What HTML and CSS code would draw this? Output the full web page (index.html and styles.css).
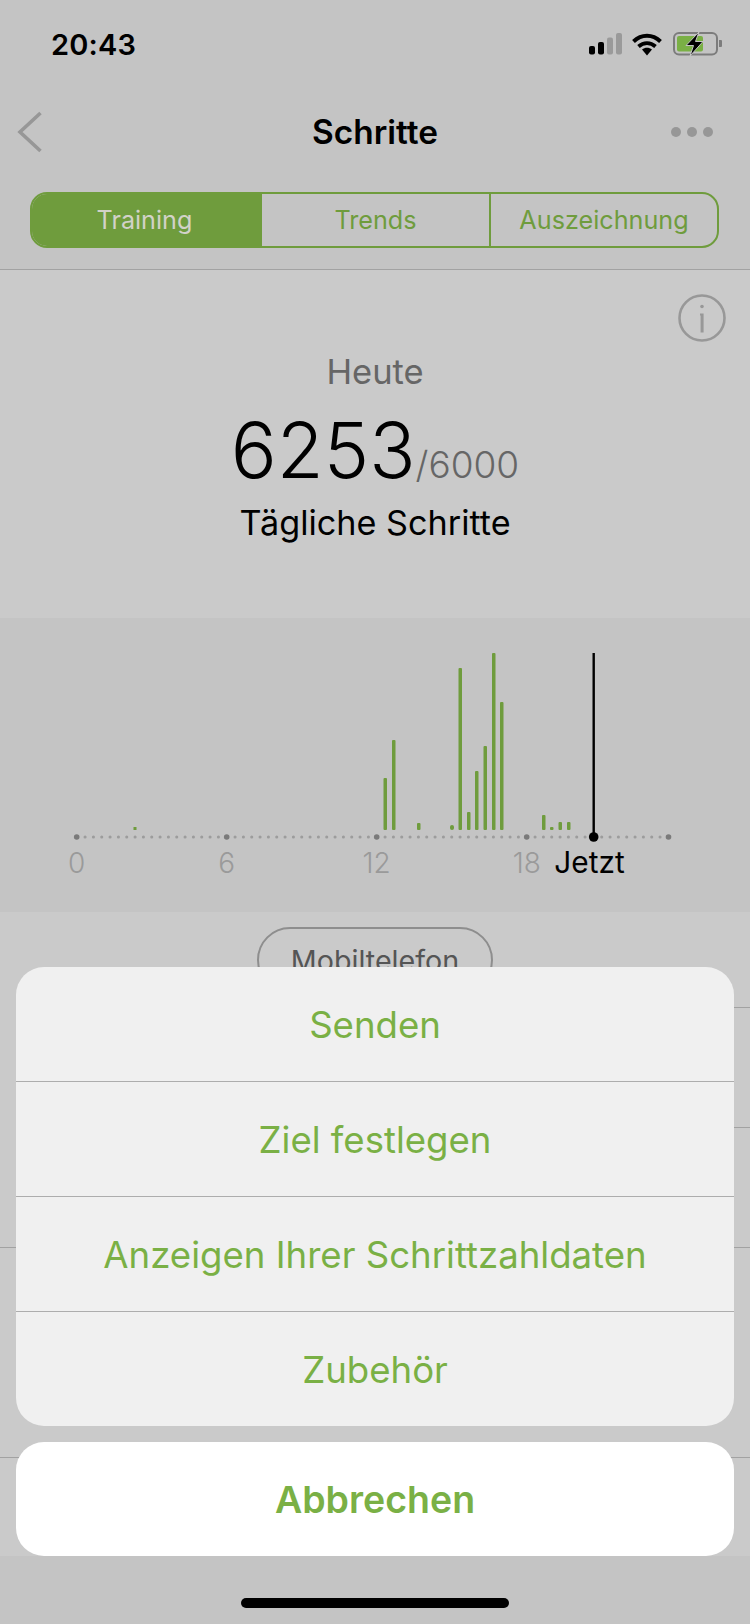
FILE: index.html
```html
<!DOCTYPE html>
<html lang="de">
<head>
<meta charset="utf-8">
<title>Schritte</title>
<link rel="stylesheet" href="styles.css">
</head>
<body>
<div class="screen">
  <header class="top">
    <div class="status">
      <span class="time">20:43</span>
      <div class="status-icons">
        <svg class="signal" width="34" height="22" viewBox="0 0 34 22">
          <rect x="0" y="13" width="6" height="8.500" rx="2" fill="#000"/>
          <rect x="9" y="9" width="6" height="12.500" rx="2" fill="#000"/>
          <rect x="18" y="4.500" width="6" height="17" rx="2" fill="#9a9a9a"/>
          <rect x="27" y="0" width="6" height="21.500" rx="2" fill="#9a9a9a"/>
        </svg>
        <svg class="wifi" width="30" height="23" viewBox="0 0 30 23">
          <path d="M1.500 8.500C9.500 0.800 20.500 0.800 28.500 8.500" fill="none" stroke="#000" stroke-width="4"/>
          <path d="M6.500 13.500C11.500 9 18.500 9 23.500 13.500" fill="none" stroke="#000" stroke-width="3.800"/>
          <path d="M10 16.500L15 22.500L20 16.500C17 14.300 13 14.300 10 16.500Z" fill="#000"/>
        </svg>
        <svg class="battery" width="50" height="24" viewBox="0 0 50 24">
          <rect x="1" y="1" width="43" height="21.500" rx="5" fill="none" stroke="#7c7c7c" stroke-width="2"/>
          <rect x="4" y="4" width="26" height="15.500" rx="2" fill="#7ab045"/>
          <path d="M46 8h2a1 1 0 0 1 1 1v5a1 1 0 0 1-1 1h-2z" fill="#7c7c7c"/>
          <path d="M26 0L13 13.500H20.500L17 24L30 9.500H22.500Z" fill="#000" stroke="#c4c4c4" stroke-width="1"/>
        </svg>
      </div>
    </div>
    <div class="nav">
      <svg class="back" width="26" height="42" viewBox="0 0 26 42">
        <path d="M23.500 2L3 21L23.500 40" fill="none" stroke="#979797" stroke-width="3.600"/>
      </svg>
      <h1 class="title">Schritte</h1>
      <div class="more"><i></i><i></i><i></i></div>
    </div>
    <div class="tabs">
      <span class="tab tab-on">Training</span>
      <span class="tab">Trends</span>
      <span class="tab">Auszeichnung</span>
    </div>
  </header>

  <section class="summary">
    <svg class="info" width="50" height="50" viewBox="0 0 50 50">
      <circle cx="25" cy="25" r="22.500" fill="none" stroke="#989898" stroke-width="2.600"/>
      <circle cx="25" cy="13.500" r="1.800" fill="#989898"/>
      <path d="M23 20.500h3.600v19h-3v-17h-0.600z" fill="#989898"/>
    </svg>
    <p class="today">Heute</p>
    <p class="count"><span class="count-now">6253</span><span class="count-goal">/6000</span></p>
    <p class="caption">Tägliche Schritte</p>
  </section>

  <section class="chart">
    <svg width="750" height="294" viewBox="0 618 750 294">
      <g fill="#6f9c3d">
        <rect x="133.500" y="827" width="3" height="3"/>
        <rect x="383.500" y="778" width="3.500" height="52" rx="1"/>
        <rect x="392" y="740" width="3.500" height="90" rx="1"/>
        <rect x="417" y="823" width="3.500" height="7" rx="1"/>
        <rect x="450" y="825" width="4" height="5" rx="2"/>
        <rect x="458.500" y="668" width="3.500" height="162" rx="1"/>
        <rect x="467" y="812" width="3.500" height="18" rx="1"/>
        <rect x="475" y="771" width="3.500" height="59" rx="1"/>
        <rect x="483.500" y="746" width="3.500" height="84" rx="1"/>
        <rect x="492" y="653" width="3.500" height="177" rx="1"/>
        <rect x="500" y="702" width="3.500" height="128" rx="1"/>
        <rect x="542" y="815" width="3.500" height="15" rx="1"/>
        <rect x="550" y="827" width="3.500" height="3" rx="1"/>
        <rect x="558.500" y="822" width="3.500" height="8" rx="1"/>
        <rect x="567" y="822" width="3.500" height="8" rx="1"/>
      </g>
      <line x1="76.700" y1="837" x2="669" y2="837" stroke="#9c9c9c" stroke-width="3" stroke-linecap="round" stroke-dasharray="0.100 8.233"/>
      <g fill="#7a7a7a">
        <circle cx="76.700" cy="837" r="2.800"/>
        <circle cx="226.700" cy="837" r="2.800"/>
        <circle cx="376.700" cy="837" r="2.800"/>
        <circle cx="526.700" cy="837" r="2.800"/>
        <circle cx="668.500" cy="837" r="2.800"/>
      </g>
      <line x1="593.700" y1="653" x2="593.700" y2="837" stroke="#000" stroke-width="2.400"/>
      <circle cx="593.700" cy="837" r="4.800" fill="#000"/>
      <g class="axis" text-anchor="middle">
        <text x="76.700" y="873">0</text>
        <text x="226.700" y="873">6</text>
        <text x="376.700" y="873">12</text>
        <text x="526.700" y="873">18</text>
        <text class="axis-now" x="589.500" y="873">Jetzt</text>
      </g>
    </svg>
  </section>

  <section class="list">
    <div class="source"><span class="pill">Mobiltelefon</span></div>
    <div class="row row-lead"></div>
    <div class="row row-inset"></div>
    <div class="row row-full"></div>
    <div class="row row-wide"></div>
    <div class="row row-end"></div>
  </section>

  <div class="foot"></div>

  <div class="sheet">
    <div class="sheet-group">
      <div class="sheet-item">Senden</div>
      <div class="sheet-item">Ziel festlegen</div>
      <div class="sheet-item">Anzeigen Ihrer Schrittzahldaten</div>
      <div class="sheet-item">Zubehör</div>
    </div>
    <div class="sheet-cancel">Abbrechen</div>
  </div>
  <div class="home"></div>
</div>
</body>
</html>
```

FILE: styles.css
```css
* { box-sizing: border-box; }
html, body { margin: 0; padding: 0; }
body { font-family: Inter, "Liberation Sans", sans-serif; background: #c4c4c4; }

.screen {
  position: relative;
  width: 750px;
  height: 1624px;
  overflow: hidden;
  background: #c4c4c4;
  display: flex;
  flex-direction: column;
}

/* header */
.top { height: 270px; border-bottom: 1px solid #a2a2a2; background: #c4c4c4; flex: none; }
.status { height: 88px; display: flex; justify-content: space-between; align-items: center; padding: 0 27px 0 51px; }
.time { font-size: 29px; font-weight: 600; color: #000; letter-spacing: 0.2px; }
.status-icons { display: flex; align-items: center; gap: 11px; }
.signal { margin-right: -2px; }
.nav { height: 88px; display: flex; align-items: center; justify-content: space-between; padding: 0 37px 0 17px; position: relative; }
.title { position: absolute; left: 0; right: 0; margin: 0; text-align: center; font-size: 33.400px; font-weight: 600; color: #000; }
.more { display: flex; gap: 5.500px; }
.more i { width: 10.500px; height: 10.500px; border-radius: 50%; background: #979797; }
.tabs { margin: 16px 31px 0 30px; height: 56px; display: grid; grid-template-columns: 228px 229px 1fr; border: 2px solid #6f9c3d; border-radius: 17px; overflow: hidden; }
.tab { display: flex; align-items: center; justify-content: center; font-size: 25.200px; color: #6f9c3d; border-left: 2px solid #6f9c3d; }
.tab-on { background: #6f9c3d; color: #d2d2c8; border-left: 0; padding-right: 3px; }

/* summary */
.summary { height: 348px; background: #cacaca; flex: none; padding-top: 78px; text-align: center; position: relative; }
.info { position: absolute; left: 677px; top: 23px; }
.summary p { margin: 0; }
.today { font-size: 34.500px; line-height: 48px; color: #666; }
.count { height: 90px; line-height: 90px; margin-top: 9px !important; }
.count-now { font-size: 76.500px; font-weight: 300; color: #000; }
.count-goal { font-size: 37px; font-weight: 300; color: #666; }
.caption { font-size: 34.200px; line-height: 44px; color: #000; margin-top: 6px !important; }

/* chart */
.chart { height: 294px; background: #c4c4c4; flex: none; }
.chart svg { display: block; }
.axis { font-size: 28px; font-weight: 300; fill: #9a9a9a; }
.axis-now { fill: #000; font-size: 29.800px; font-weight: 400; }

/* list behind the sheet */
.list { height: 644px; background: #cacaca; flex: none; display: flex; flex-direction: column; }
.source { height: 95px; padding-top: 15px; display: flex; justify-content: center; }
.pill { width: 236px; height: 66px; border: 2px solid #8e8e8e; border-radius: 33px; display: flex; align-items: center; justify-content: center; font-size: 28.700px; color: #555; }
.row { border-bottom: 1px solid #a2a2a2; }
.row-lead { height: 1px; margin-left: 40px; }
.row-inset { height: 120px; margin-left: 40px; }
.row-full { height: 120px; }
.row-wide { height: 210px; }
.row-end { flex: 1; border-bottom: 0; }
.foot { flex: 1; background: #c4c4c4; }

/* action sheet */
.sheet { position: absolute; left: 16px; right: 16px; top: 967px; display: flex; flex-direction: column; gap: 16px; }
.sheet-group { background: #f0f0f0; border-radius: 28px; overflow: hidden; }
.sheet-item { height: 115px; padding-top: 2px; display: flex; align-items: center; justify-content: center; font-size: 36.600px; color: #7ab045; border-bottom: 1px solid #adadad; }
.sheet-item:last-child { border-bottom: 0; height: 114px; }
.sheet-cancel { height: 114px; background: #fff; border-radius: 28px; display: flex; align-items: center; justify-content: center; font-size: 37.500px; font-weight: 600; color: #7ab045; }
.home { position: absolute; left: 241px; top: 1598px; width: 268px; height: 10px; border-radius: 5px; background: #000; }
```
